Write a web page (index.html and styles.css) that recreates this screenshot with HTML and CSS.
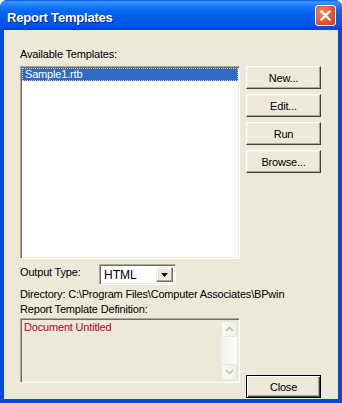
FILE: index.html
```html
<!DOCTYPE html>
<html>
<head>
<meta charset="utf-8">
<link rel="stylesheet" href="styles.css">
</head>
<body>
<div class="window">
  <div class="titlebar">
    <span class="title">Report Templates</span>
    <span class="close-x"><svg width="13" height="13" viewBox="0 0 13 13"><path d="M2.5 2.5 L10.5 10.5 M10.5 2.5 L2.5 10.5" stroke="#fff" stroke-width="2.2" stroke-linecap="square" fill="none"/></svg></span>
  </div>
  <div class="client">
    <div class="lbl avail">Available Templates:</div>
    <div class="listbox sunken"><div class="item sel">Sample1.rtb</div></div>
    <div class="btncol">
      <button class="btn">New...</button>
      <button class="btn">Edit...</button>
      <button class="btn">Run</button>
      <button class="btn">Browse...</button>
    </div>
    <div class="output">
      <span class="lbl otlabel">Output Type:</span>
      <div class="combo sunken">
        <span class="val">HTML</span>
        <span class="drop"><svg width="7" height="4" viewBox="0 0 7 4"><path d="M0 0 H7 L3.5 4 Z" fill="#000"/></svg></span>
      </div>
    </div>
    <div class="lbl dir">Directory: C:\Program Files\Computer Associates\BPwin</div>
    <div class="lbl def">Report Template Definition:</div>
    <div class="richedit sunken">
      <div class="rtext">Document Untitled</div>
      <div class="vscroll">
        <span class="sbtn"><svg width="9" height="6" viewBox="0 0 9 6"><path d="M1 5 L4.5 1.5 L8 5" stroke="#c2bfb2" stroke-width="1.6" fill="none"/></svg></span>
        <span class="strack"></span>
        <span class="sbtn"><svg width="9" height="6" viewBox="0 0 9 6"><path d="M1 1 L4.5 4.5 L8 1" stroke="#c2bfb2" stroke-width="1.6" fill="none"/></svg></span>
      </div>
    </div>
    <button class="btn default closebtn">Close</button>
  </div>
</div>
</body>
</html>
```

FILE: styles.css
```css
html, body {
  margin: 0;
  padding: 0;
  background: #ffffff;
}
body {
  font-family: "Liberation Sans", Arial, sans-serif;
  font-size: 11px;
  line-height: 13px;
  letter-spacing: -0.18px;
  color: #000;
}
.window {
  width: 342px;
  height: 403px;
  display: flex;
  flex-direction: column;
  background: #0a48dc;
  border-radius: 7px 7px 0 0;
  overflow: hidden;
}
.titlebar {
  height: 30px;
  flex: none;
  display: flex;
  align-items: flex-start;
  justify-content: space-between;
  padding: 0 6px 0 7px;
  box-sizing: border-box;
  background: linear-gradient(to bottom, #0a5fe8 0px, #3d95ff 2px, #2b89fd 4px, #1478f8 7px, #0668f2 11px, #005fec 16px, #0058e6 22px, #0054e3 26px, #0047d3 29px, #0040c8 30px);
}
.title {
  font-family: "Liberation Sans", Arial, sans-serif;
  font-weight: bold;
  font-size: 13px;
  line-height: 26px;
  letter-spacing: -0.2px;
  padding-top: 5px;
  color: #fff;
  text-shadow: 1px 1px 0 #0a1e8a;
}
.close-x {
  margin-top: 5px;
  width: 21px;
  height: 21px;
  box-sizing: border-box;
  border: 1px solid #fff;
  border-radius: 3px;
  background: radial-gradient(circle at 35% 35%, #ef8a66 0%, #e0582f 55%, #c8411b 100%);
  display: flex;
  align-items: center;
  justify-content: center;
}
.close-x svg { display: block; }
.client {
  flex: 1;
  margin: 0 4px 4px 4px;
  background: #ece9d8;
  display: grid;
  grid-template-columns: 220px 75px;
  grid-template-areas:
    "avail ."
    "list btns"
    "output ."
    "dir dir"
    "def ."
    "edit close";
  grid-template-rows: auto auto auto auto auto 1fr;
  column-gap: 6px;
  padding: 18px 0 0 16px;
  box-sizing: border-box;
  align-content: start;
}
.lbl { white-space: nowrap; }
.avail { grid-area: avail; margin-bottom: 5px; }
.sunken {
  box-sizing: border-box;
  border: 1px solid;
  border-color: #aca899 #fff #fff #aca899;
  box-shadow: inset 1px 1px 0 #716f64, inset -1px -1px 0 #f1efe2;
}
.listbox {
  grid-area: list;
  height: 193px;
  background: #fff;
  padding: 1px;
}
.item {
  height: 13px;
  padding-left: 3px;
  white-space: nowrap;
}
.item.sel {
  background: #316ac5;
  color: #fff;
  outline: 1px dotted #c8c8c8;
  outline-offset: -1px;
}
.btncol {
  grid-area: btns;
  display: flex;
  flex-direction: column;
  gap: 5px;
}
.btn {
  font-family: "Liberation Sans", Arial, sans-serif;
  font-size: 11px;
  letter-spacing: -0.18px;
  color: #000;
  width: 75px;
  height: 23px;
  padding: 0;
  margin: 0;
  box-sizing: border-box;
  background: #ece9d8;
  border: 1px solid;
  border-color: #fff #404040 #404040 #fff;
  box-shadow: inset -1px -1px 0 #aca899, inset 1px 1px 0 #f1efe2;
  border-radius: 0;
}
.btn.default {
  border: 1px solid #000;
  box-shadow: inset 1px 1px 0 #fff, inset -1px -1px 0 #404040, inset -2px -2px 0 #aca899;
}
.output {
  grid-area: output;
  display: flex;
  align-items: flex-start;
  margin-top: 5px;
}
.otlabel {
  width: 79px;
  padding-top: 2px;
}
.combo {
  width: 77px;
  height: 21px;
  background: #fff;
  display: flex;
  align-items: stretch;
  padding: 2px;
}
.combo .val {
  flex: 1;
  padding-left: 2px;
  font-size: 12px;
  line-height: 17px;
  letter-spacing: 0;
}
.drop {
  width: 17px;
  box-sizing: border-box;
  background: #ece9d8;
  border: 1px solid;
  border-color: #f1efe2 #716f64 #716f64 #f1efe2;
  box-shadow: inset -1px -1px 0 #aca899, inset 1px 1px 0 #fff;
  display: flex;
  align-items: center;
  justify-content: center;
}
.drop svg { display: block; }
.dir { grid-area: dir; margin-top: 3px; }
.def { grid-area: def; margin-top: 2px; }
.richedit {
  grid-area: edit;
  margin-top: 2px;
  height: 65px;
  background: #ece9d8;
  display: flex;
  padding: 2px;
}
.rtext {
  flex: 1;
  color: #c1001f;
  padding-left: 1px;
}
.vscroll {
  width: 16px;
  display: flex;
  flex-direction: column;
  background: linear-gradient(to right, #f3f1ec, #fefefe);
}
.sbtn {
  height: 16px;
  box-sizing: border-box;
  border: 1px solid #e9e7de;
  border-radius: 2px;
  background: linear-gradient(to right, #f9f8f4, #f1efe8);
  display: flex;
  align-items: center;
  justify-content: center;
}
.strack { flex: 1; }
.closebtn {
  grid-area: close;
  align-self: end;
  margin-bottom: 1px;
}
```
